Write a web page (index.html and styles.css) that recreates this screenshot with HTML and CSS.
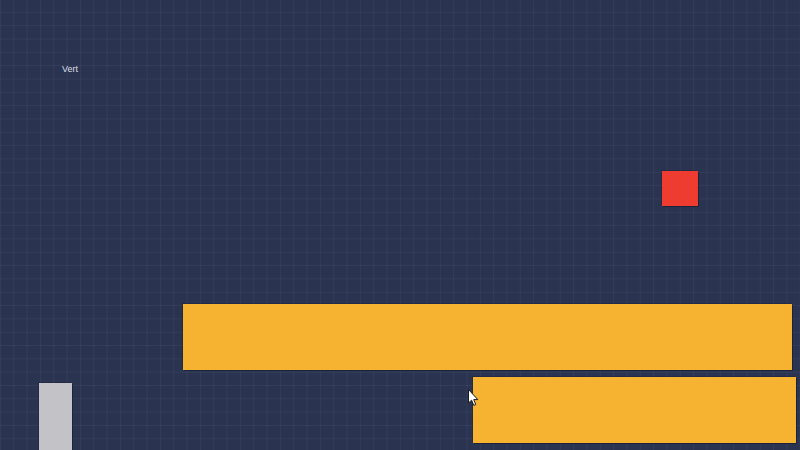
FILE: index.html
```html
<!DOCTYPE html>
<html lang="en">
<head>
<meta charset="utf-8">
<title>Scene</title>
<link rel="stylesheet" href="styles.css">
</head>
<body>
<div class="stage">
  <div class="label">Vert</div>
  <div class="block red"></div>
  <div class="block platform p1"></div>
  <div class="block platform p2"></div>
  <div class="block player"></div>
  <svg class="cursor" width="12" height="18" viewBox="0 0 12 18">
    <path d="M0.5 0.5 L0.5 14 L3.6 11.2 L5.8 16.4 L7.8 15.6 L5.7 10.6 L9.8 10.6 Z" fill="#ffffff" stroke="#1a1a1a" stroke-width="1" stroke-linejoin="round"/>
  </svg>
</div>
</body>
</html>
```
FILE: styles.css
```css
html, body {
  margin: 0;
  padding: 0;
  background: #2a3350;
}
.stage {
  position: relative;
  width: 800px;
  height: 450px;
  overflow: hidden;
  background-color: #2a3350;
  background-image:
    linear-gradient(to right, rgba(120,140,170,0.11) 1px, transparent 1px),
    linear-gradient(to bottom, rgba(120,140,170,0.11) 1px, transparent 1px);
  background-size: 13.333px 13.333px;
  background-position: 0 -1.5px;
  font-family: "Liberation Sans", Arial, sans-serif;
}
.label {
  position: absolute;
  left: 62px;
  top: 64px;
  font-size: 9px;
  color: #dcdfe6;
}
.block {
  position: absolute;
  box-shadow: 1px 1px 0 rgba(10,14,30,0.45), -1px -1px 0 rgba(10,14,30,0.25);
}
.red {
  left: 662px;
  top: 171px;
  width: 36px;
  height: 35px;
  background: #ee3d30;
}
.platform {
  background: #f6b332;
}
.p1 {
  left: 183px;
  top: 304px;
  width: 609px;
  height: 66px;
}
.p2 {
  left: 473px;
  top: 377px;
  width: 323px;
  height: 66px;
}
.player {
  left: 39px;
  top: 383px;
  width: 33px;
  height: 70px;
  background: #c3c2c7;
}
.cursor {
  position: absolute;
  left: 468px;
  top: 389px;
}
```
